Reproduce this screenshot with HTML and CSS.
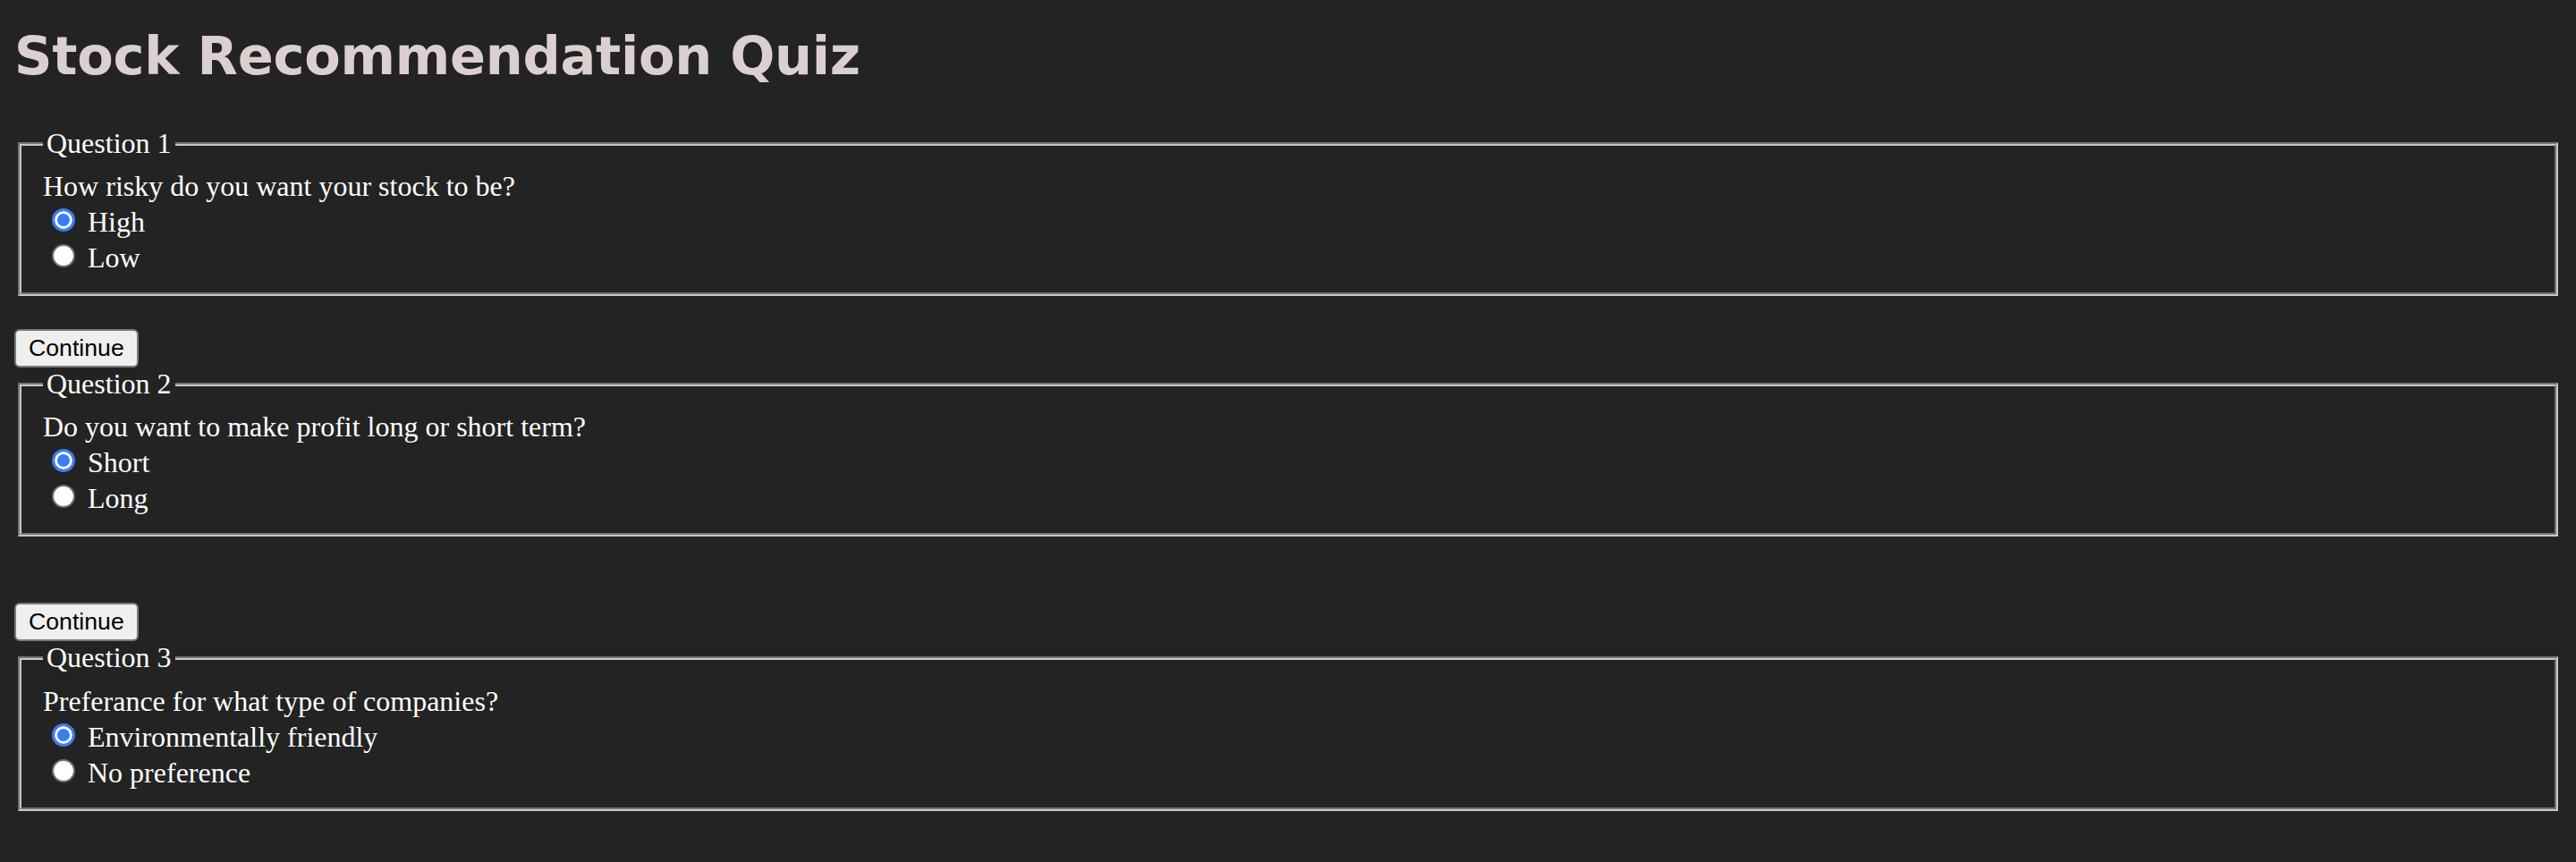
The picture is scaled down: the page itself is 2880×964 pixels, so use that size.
FILE: index.html
```html
<!DOCTYPE html>
<html lang="en">
<head>
<meta charset="utf-8">
<title>Stock Recommendation Quiz</title>
<link rel="stylesheet" href="styles.css">
</head>
<body>
<h1 class="title">Stock Recommendation Quiz</h1>
<form class="quiz">
<fieldset class="question">
<legend class="question-legend">Question 1</legend>
How risky do you want your stock to be?<br>
<input class="radio" type="radio" name="risk" value="high" checked> High<br>
<input class="radio" type="radio" name="risk" value="low"> Low
</fieldset>
<br>
<button class="continue" type="button">Continue</button>
<fieldset class="question">
<legend class="question-legend">Question 2</legend>
Do you want to make profit long or short term?<br>
<input class="radio" type="radio" name="term" value="short" checked> Short<br>
<input class="radio" type="radio" name="term" value="long"> Long
</fieldset>
<br><br>
<button class="continue" type="button">Continue</button>
<fieldset class="question">
<legend class="question-legend">Question 3</legend>
Preferance for what type of companies?<br>
<input class="radio" type="radio" name="pref" value="env" checked> Environmentally friendly<br>
<input class="radio" type="radio" name="pref" value="none"> No preference
</fieldset>
</form>
</body>
</html>
```
FILE: styles.css
```css
html {
  background: #232323;
}
body {
  margin: 16px;
  background: #232323;
  color: #ffffff;
  font-family: "Liberation Serif", "Times New Roman", serif;
  font-size: 32px;
}
.title {
  margin: 0 0 33px;
  font-family: "DejaVu Sans", sans-serif;
  font-weight: 700;
  font-size: 59px;
  line-height: 93px;
  color: #dccfcf;
  letter-spacing: -0.25px;
}
.quiz {
  margin: 0;
}
.question {
  margin: 0 4px;
  border: 4px groove #c8c8c8;
  padding: 11.2px 24px 20px;
}
.question-legend {
  padding: 0 4px;
}
.radio {
  appearance: none;
  -webkit-appearance: none;
  width: 26px;
  height: 26px;
  margin: 6px 6px 0 10px;
  box-sizing: border-box;
  border-radius: 50%;
  border: 2px solid #6e6e6e;
  background: #ffffff;
  vertical-align: baseline;
}
.radio:checked {
  border: 3px solid #3a7df6;
  background: #3a7df6;
  box-shadow: inset 0 0 0 3px #ffffff;
}
.continue {
  appearance: none;
  -webkit-appearance: none;
  margin: 0;
  font-family: "Liberation Sans", Arial, sans-serif;
  font-size: 26.67px;
  color: #000000;
  background: #efefef;
  border: 2px solid #7a7a7a;
  border-radius: 6px;
  padding: 4px 14px;
}
```
